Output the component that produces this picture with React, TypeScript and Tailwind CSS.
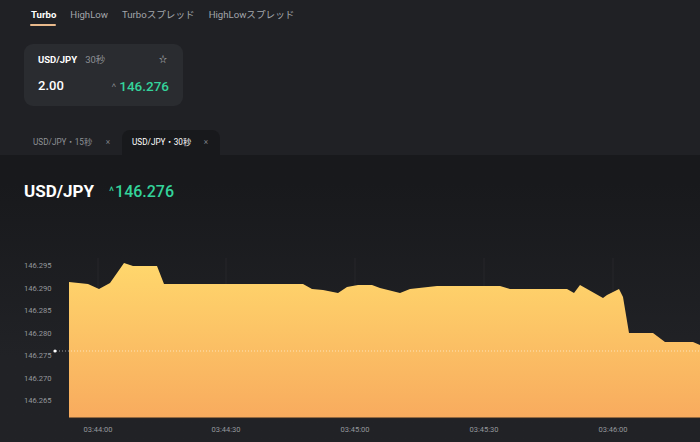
import React from 'react';

const FONT = "font-['Roboto','Noto_Sans_CJK_JP',sans-serif]";

// chart points in page coords (chart svg starts at y=240)
const PTS: [number, number][] = [
  [69, 282], [88, 284], [99, 289], [110, 283], [124, 263], [133, 266], [157, 266], [164, 284],
  [303, 284], [312, 289], [323, 290], [338, 293], [347, 287], [358, 285], [372, 285], [380, 288],
  [400, 293], [410, 289], [437, 286], [500, 286], [510, 289], [567, 289], [574, 293], [580, 285],
  [603, 298], [607, 295], [619, 289], [623, 297], [629, 333], [653, 333], [665, 342], [693, 342],
  [700, 345],
];

const Y_LABELS = ['146.295', '146.290', '146.285', '146.280', '146.275', '146.270', '146.265'];
const X_LABELS: [string, number][] = [
  ['03:44:00', 98], ['03:44:30', 226], ['03:45:00', 355], ['03:45:30', 484], ['03:46:00', 613],
];

const OFF = 240;

const Chart: React.FC = () => {
  const top = PTS.map(([x, y]) => `${x},${y - OFF}`).join(' ');
  const poly = `${top} 700,${418 - OFF} 69,${418 - OFF}`;
  return (
    <svg width={700} height={202} className="block">
      <defs>
        <linearGradient id="fill" x1="0" y1="0" x2="0" y2="1">
          <stop offset="0%" stopColor="#ffd76c" />
          <stop offset="100%" stopColor="#f8ab5e" />
        </linearGradient>
      </defs>
      {X_LABELS.map(([l, x]) => (
        <line key={l} x1={x} y1={18} x2={x} y2={418 - OFF} stroke="#26272b" strokeWidth={1} />
      ))}
      <polygon points={poly} fill="url(#fill)" />
      <line x1={69} y1={418 - OFF} x2={700} y2={418 - OFF} stroke="#2e2622" strokeWidth={1} />
      {Y_LABELS.map((l, i) => (
        <text key={l} x={24} y={265 + i * 22.5 - OFF + 3} fontSize={7.6} fill="#95989d">
          {l}
        </text>
      ))}
      <line x1={56} y1={351 - OFF} x2={700} y2={351 - OFF} stroke="#ffffff" strokeOpacity={0.7} strokeWidth={0.8} strokeDasharray="1 2" />
      <circle cx={55} cy={351 - OFF} r={1.6} fill="#ffffff" />
      {X_LABELS.map(([l, x]) => (
        <text key={l} x={x} y={429 - OFF + 3} fontSize={7.5} fill="#95989d" textAnchor="middle">
          {l}
        </text>
      ))}
    </svg>
  );
};

const App: React.FC = () => {
  return (
    <div className={`w-[700px] h-[442px] overflow-hidden bg-[#202125] flex flex-col ${FONT}`}>
      {/* top nav */}
      <div className="flex items-center h-[30px] pl-[31px] gap-[14px] text-[9.6px] text-[#a3a6ab]">
        <div className="relative h-full flex items-center font-bold text-white">
          Turbo
          <span className="absolute left-[-1px] right-0 bottom-[4px] h-[2px] rounded bg-[#e9b98b]" />
        </div>
        <span>HighLow</span>
        <span>Turboスプレッド</span>
        <span>HighLowスプレッド</span>
      </div>

      {/* card */}
      <div className="pl-[24px] pt-[14px]">
        <div className="w-[159px] h-[62px] rounded-[9px] bg-[#2a2c30] px-[14px] pt-[10px]">
          <div className="flex items-center h-[12px]">
            <span className="text-[9.5px] font-bold text-white">USD/JPY</span>
            <span className="ml-[8px] text-[9.5px] text-[#8c8f94]">30秒</span>
            <span className="ml-auto mr-[2px] text-[8px] text-[#c8cacd] leading-none">☆</span>
          </div>
          <div className="flex items-center mt-[12px] h-[16px]">
            <span className="text-[13px] font-medium text-white">2.00</span>
            <span className="ml-auto text-[8px] text-[#8c8f94] mr-[3px]">˄</span>
            <span className="text-[13.5px] font-medium text-[#34d39b]">146.276</span>
          </div>
        </div>
      </div>

      {/* instrument tabs */}
      <div className="flex items-end h-[25px] mt-[24px] pl-[24px] text-[8.2px]">
        <div className="flex items-center h-[25px] w-[98px] pl-[9px] text-[#8e9196]">
          <span>USD/JPY・15秒</span>
          <span className="ml-auto mr-[12px] text-[#7a7d82]">×</span>
        </div>
        <div className="flex items-center h-[25px] w-[98px] pl-[10px] rounded-t-[8px] bg-[#18191c] text-white">
          <span>USD/JPY・30秒</span>
          <span className="ml-auto mr-[12px] text-[#7a7d82]">×</span>
        </div>
      </div>

      {/* chart panel */}
      <div className="flex-1 bg-linear-to-b from-[#18191c] from-10% to-[#212226] to-70% flex flex-col">
        <div className="flex items-center h-[85px] pl-[24px] pb-[12px]">
          <span className="text-[17px] font-bold text-white">USD/JPY</span>
          <span className="ml-[15px] text-[12px] text-[#34d39b] mr-[1px]">^</span>
          <span className="text-[16px] font-medium text-[#34d39b]">146.276</span>
        </div>
        <div className="flex-1">
          <Chart />
        </div>
      </div>
    </div>
  );
};

export default App;
